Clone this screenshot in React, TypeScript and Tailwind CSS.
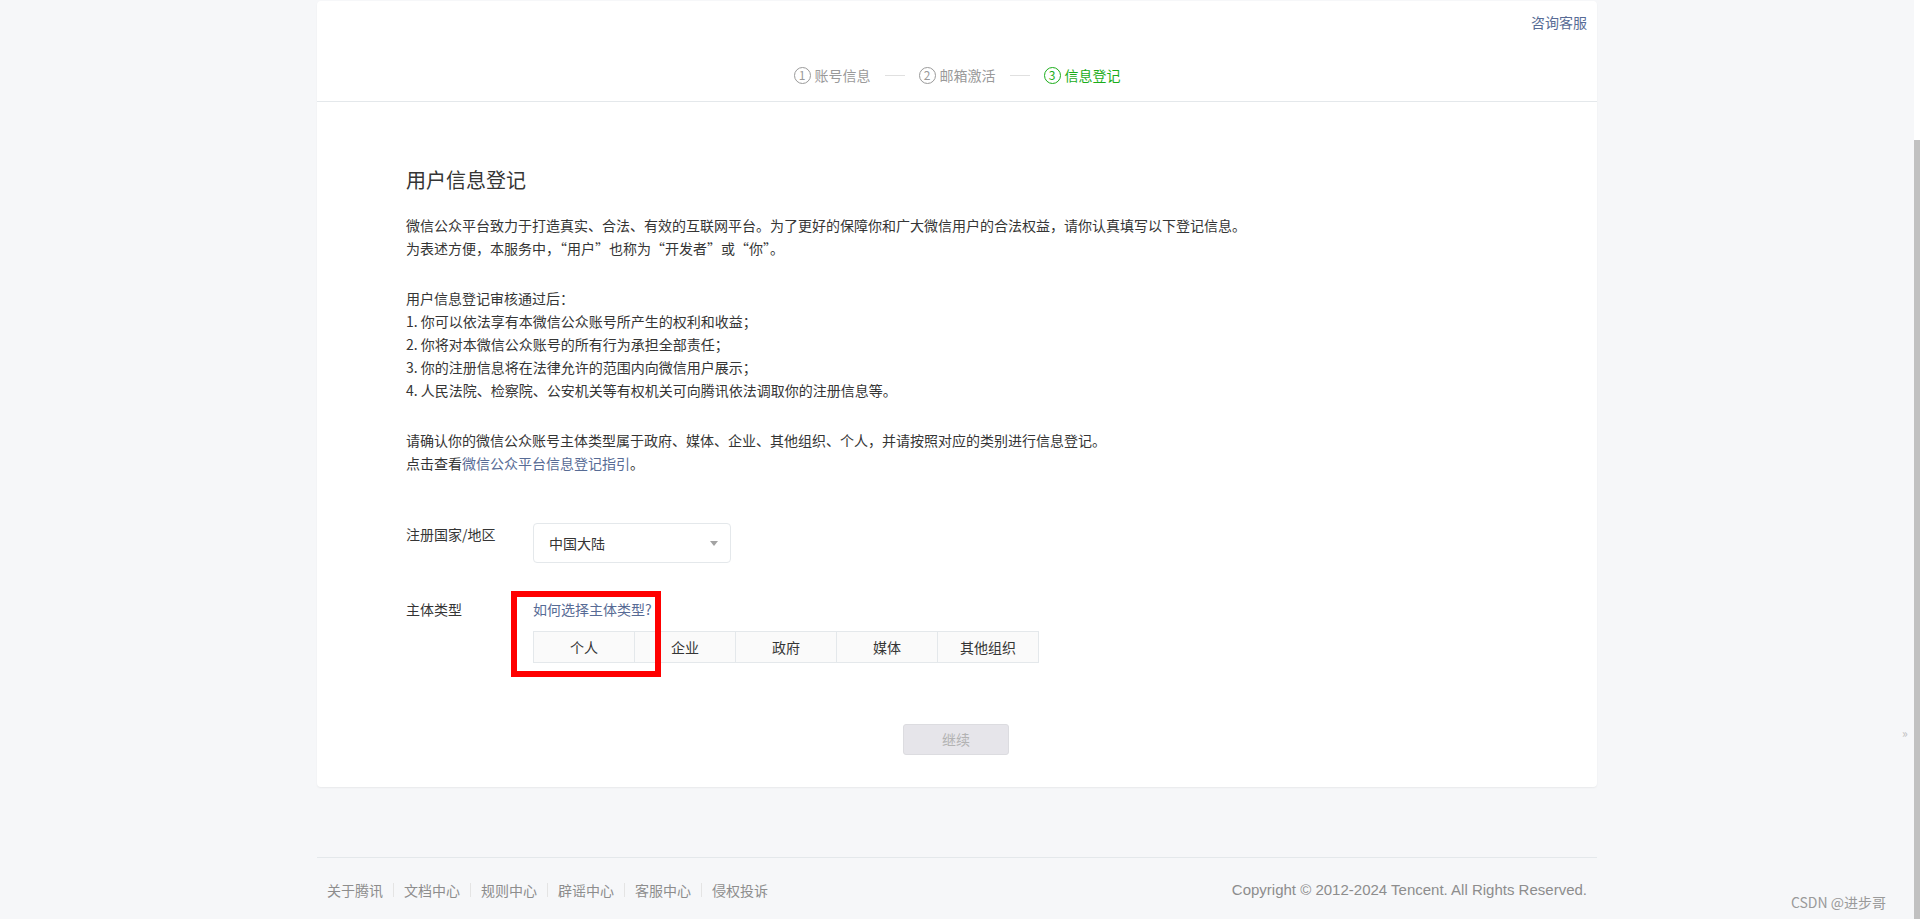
const font = { fontFamily: '"Noto Sans CJK SC", "Liberation Sans", sans-serif' };

const steps = [
  { n: "1", label: "账号信息", active: false },
  { n: "2", label: "邮箱激活", active: false },
  { n: "3", label: "信息登记", active: true },
];

const types = ["个人", "企业", "政府", "媒体", "其他组织"];
const footerLinks = ["关于腾讯", "文档中心", "规则中心", "辟谣中心", "客服中心", "侵权投诉"];

const Steps = () => (
  <div className="flex items-center justify-center text-[14px] leading-[20px]">
    {steps.map((s, i) => (
      <div key={s.n} className="flex items-center">
        {i > 0 && <span className="mx-[14px] h-px w-[20px] bg-[#e0e0e0]" />}
        <span
          className={
            s.active
              ? "flex h-[17px] w-[17px] items-center justify-center rounded-full border border-[#1aad19] text-[12px] leading-none text-[#1aad19]"
              : "flex h-[17px] w-[17px] items-center justify-center rounded-full border border-[#9a9a9a] text-[12px] leading-none text-[#9a9a9a]"
          }
        >
          {s.n}
        </span>
        <span className={s.active ? "ml-[4px] text-[#1aad19]" : "ml-[4px] text-[#9a9a9a]"}>{s.label}</span>
      </div>
    ))}
  </div>
);

export default function App() {
  return (
    <div className="relative flex min-h-[919px] bg-[#f6f7f9] text-[#353535]" style={font}>
      <div className="flex-1">
        <div className="mx-auto mt-px w-[1280px] rounded-[4px] bg-white shadow-[0_1px_2px_rgba(0,0,0,0.06)]">
          {/* header */}
          <div className="border-b border-[#e4e8eb] px-[10px] pt-[11px] pb-[16px]">
            <div className="flex justify-end text-[14px] leading-[20px] text-[#576b95]">
              <a href="#">咨询客服</a>
            </div>
            <div className="mt-[33px]">
              <Steps />
            </div>
          </div>

          {/* body */}
          <div className="pl-[89px] pr-[90px] pt-[64px] pb-[32px]">
            <h2 className="text-[20px] leading-[28px] font-normal text-[#353535]">用户信息登记</h2>
            <div className="mt-[20px] text-[14px] leading-[23px]">
              <p>微信公众平台致力于打造真实、合法、有效的互联网平台。为了更好的保障你和广大微信用户的合法权益，请你认真填写以下登记信息。</p>
              <p>为表述方便，本服务中，“用户”也称为“开发者”或“你”。</p>
            </div>
            <div className="mt-[27px] text-[14px] leading-[23px]">
              <p>用户信息登记审核通过后：</p>
              <p>1. 你可以依法享有本微信公众账号所产生的权利和收益；</p>
              <p>2. 你将对本微信公众账号的所有行为承担全部责任；</p>
              <p>3. 你的注册信息将在法律允许的范围内向微信用户展示；</p>
              <p>4. 人民法院、检察院、公安机关等有权机关可向腾讯依法调取你的注册信息等。</p>
            </div>
            <div className="mt-[27px] text-[14px] leading-[23px]">
              <p>请确认你的微信公众账号主体类型属于政府、媒体、企业、其他组织、个人，并请按照对应的类别进行信息登记。</p>
              <p>
                点击查看<a href="#" className="text-[#576b95]">微信公众平台信息登记指引</a>。
              </p>
            </div>

            {/* country */}
            <div className="mt-[48px] flex text-[14px]">
              <label className="w-[127px] leading-[22px]">注册国家/地区</label>
              <div className="flex h-[40px] w-[198px] items-center justify-between rounded-[4px] border border-[#e4e8eb] pl-[15px] pr-[12px]">
                <span>中国大陆</span>
                <svg width="8" height="5" viewBox="0 0 8 5">
                  <path d="M0 0h8L4 5z" fill="#a3a3a3" />
                </svg>
              </div>
            </div>

            {/* subject type */}
            <div className="mt-[35px] flex text-[14px]">
              <label className="w-[127px] leading-[22px]">主体类型</label>
              <div className="relative">
                <a href="#" className="block leading-[22px] text-[#576b95]">
                  如何选择主体类型?
                </a>
                <div className="mt-[11px] flex">
                  {types.map((t, i) => (
                    <div
                      key={t}
                      className={
                        i === 0
                          ? "flex h-[32px] w-[102px] items-center justify-center border border-[#e4e8eb] bg-[#fafafa]"
                          : "-ml-px flex h-[32px] w-[102px] items-center justify-center border border-[#e4e8eb] bg-[#fafafa]"
                      }
                    >
                      {t}
                    </div>
                  ))}
                </div>
                <div className="absolute left-[-22px] top-[-7px] h-[86px] w-[150px] border-[6px] border-[#ff0000]" />
              </div>
            </div>

            <div className="mt-[61px] flex justify-center pr-[1px]">
              <button className="h-[31px] w-[106px] rounded-[3px] border border-[#dcdce0] bg-[#e6e5ea] text-[14px] text-[#b2b2b2]">
                继续
              </button>
            </div>
          </div>
        </div>

        {/* footer */}
        <div className="mx-auto mt-[70px] w-[1280px] border-t border-[#e4e8eb] px-[10px] pt-[22px] text-[14px] leading-[20px]">
          <div className="flex items-center justify-between">
            <div className="flex items-center text-[#8d8d8d]">
              {footerLinks.map((l, i) => (
                <div key={l} className="flex items-center">
                  {i > 0 && <span className="mx-[10px] h-[14px] w-px bg-[#e4e4e4]" />}
                  <a href="#">{l}</a>
                </div>
              ))}
            </div>
            <div className="text-[15px] text-[#8d8d8d]" style={{ fontFamily: '"Liberation Sans", sans-serif' }}>
              Copyright © 2012-2024 Tencent. All Rights Reserved.
            </div>
          </div>
        </div>
      </div>

      {/* scrollbar strip */}
      <div className="flex w-[6px] flex-col">
        <div className="h-[140px] bg-white" />
        <div className="flex-1 bg-[#c1c1c1]" />
      </div>

      <span className="absolute left-[1902px] top-[727px] text-[12px] leading-none text-[#c0c0c0]">»</span>
      <span className="absolute right-[34px] top-[892px] text-[14px] leading-[20px] text-[#9a9a9a]">CSDN @进步哥</span>
    </div>
  );
}
